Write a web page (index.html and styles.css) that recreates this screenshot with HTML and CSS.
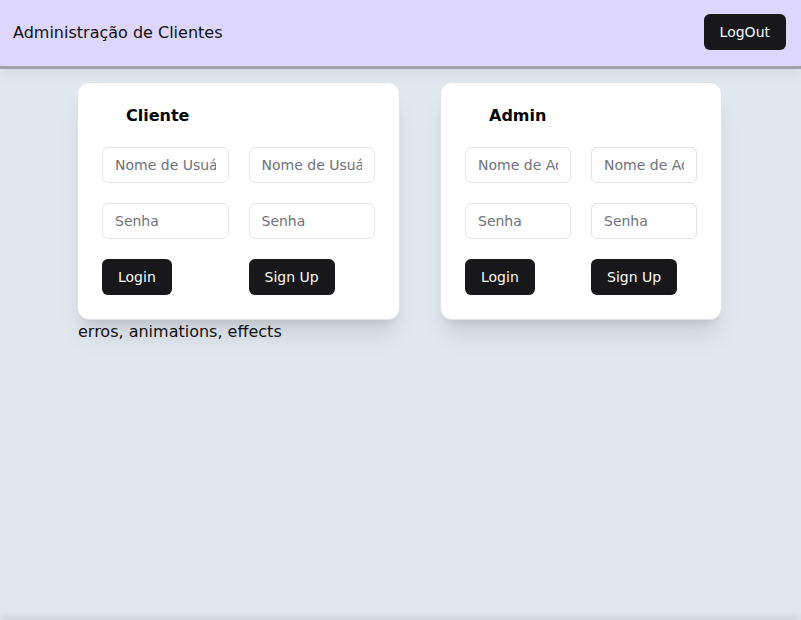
FILE: index.html
```html
<!DOCTYPE html>
<html lang="pt">
<head>
<meta charset="utf-8">
<title>Administração de Clientes</title>
<link rel="stylesheet" href="styles.css">
</head>
<body>
<header class="topbar">
  <span class="brand">Administração de Clientes</span>
  <button class="btn">LogOut</button>
</header>
<main class="main">
  <div class="wrap">
    <div class="cards">
      <section class="card card-client">
        <h2 class="card-title">Cliente</h2>
        <div class="grid">
          <input class="field" placeholder="Nome de Usuário">
          <input class="field" placeholder="Nome de Usuário">
          <input class="field" type="password" placeholder="Senha">
          <input class="field" type="password" placeholder="Senha">
          <div><button class="btn">Login</button></div>
          <div><button class="btn">Sign Up</button></div>
        </div>
      </section>
      <section class="card card-admin">
        <h2 class="card-title">Admin</h2>
        <div class="grid">
          <input class="field" placeholder="Nome de Administrador">
          <input class="field" placeholder="Nome de Administrador">
          <input class="field" type="password" placeholder="Senha">
          <input class="field" type="password" placeholder="Senha">
          <div><button class="btn">Login</button></div>
          <div><button class="btn">Sign Up</button></div>
        </div>
      </section>
    </div>
    <p class="note">erros, animations, effects</p>
  </div>
</main>
<footer class="footer"></footer>
</body>
</html>
```

FILE: styles.css
```css
* { box-sizing: border-box; }
html, body {
  margin: 0;
  padding: 0;
}
body {
  background: #e2e8f0;
  font-family: "DejaVu Sans", sans-serif;
  color: #111;
}
.topbar {
  height: 69px;
  background: #ddd6fe;
  border-bottom: 3px solid #a1a1aa;
  box-shadow: 0 4px 14px rgba(0, 0, 0, 0.08);
  display: flex;
  align-items: center;
  justify-content: space-between;
  padding: 0 15px 2px 13px;
  position: relative;
  z-index: 1;
}
.brand {
  font-size: 16px;
  color: #111;
}
.btn {
  font-family: "DejaVu Sans", sans-serif;
  font-size: 14px;
  height: 36px;
  padding: 0 16px;
  border: 0;
  border-radius: 6px;
  background: #18181b;
  color: #fafafa;
}
.main {
  min-height: calc(100vh - 69px);
  padding-top: 13px;
}
.wrap {
  width: 645px;
  margin: 0 0 0 77px;
}
.cards {
  display: flex;
  justify-content: space-between;
  align-items: flex-start;
}
.card {
  background: #fff;
  border: 1px solid #e4e4e7;
  border-radius: 12px;
  box-shadow: 0 20px 25px -5px rgba(0, 0, 0, 0.1), 0 8px 10px -6px rgba(0, 0, 0, 0.1);
  padding: 23px 24px 24px;
}
.card-client { width: 323px; }
.card-admin { width: 282px; }
.card-title {
  margin: 0 0 22px 24px;
  font-size: 16px;
  font-weight: bold;
  line-height: 19px;
  color: #000;
}
.grid {
  display: grid;
  grid-template-columns: 1fr 1fr;
  gap: 20px;
}
.field {
  width: 100%;
  min-width: 0;
  height: 36px;
  border: 1px solid #e4e4e7;
  border-radius: 6px;
  padding: 0 12px;
  font-family: "DejaVu Sans", sans-serif;
  font-size: 14px;
  background: #fff;
  color: #111;
}
.field::placeholder {
  color: #71717a;
}
.note {
  margin: 2px 0 0 1px;
  font-size: 16px;
  line-height: 19px;
}
.footer {
  height: 40px;
  box-shadow: 0 -3px 8px rgba(0, 0, 0, 0.1);
}
```
